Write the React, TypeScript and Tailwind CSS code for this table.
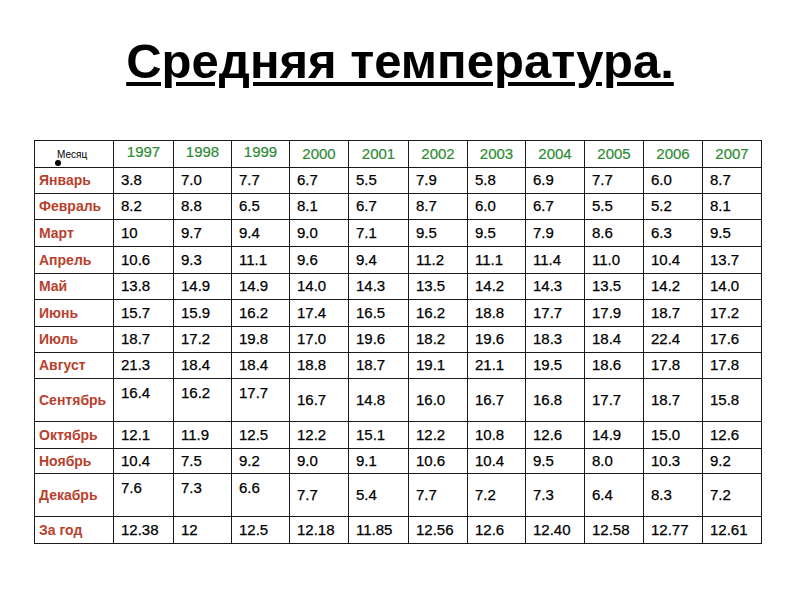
import React from "react";

const years = ["1997","1998","1999","2000","2001","2002","2003","2004","2005","2006","2007"];
const rows: { m: string; v: string[]; tall?: boolean; h: number }[] = [
  { m: "Январь", v: ["3.8","7.0","7.7","6.7","5.5","7.9","5.8","6.9","7.7","6.0","8.7"], h: 26 },
  { m: "Февраль", v: ["8.2","8.8","6.5","8.1","6.7","8.7","6.0","6.7","5.5","5.2","8.1"], h: 26 },
  { m: "Март", v: ["10","9.7","9.4","9.0","7.1","9.5","9.5","7.9","8.6","6.3","9.5"], h: 27 },
  { m: "Апрель", v: ["10.6","9.3","11.1","9.6","9.4","11.2","11.1","11.4","11.0","10.4","13.7"], h: 27 },
  { m: "Май", v: ["13.8","14.9","14.9","14.0","14.3","13.5","14.2","14.3","13.5","14.2","14.0"], h: 26 },
  { m: "Июнь", v: ["15.7","15.9","16.2","17.4","16.5","16.2","18.8","17.7","17.9","18.7","17.2"], h: 27 },
  { m: "Июль", v: ["18.7","17.2","19.8","17.0","19.6","18.2","19.6","18.3","18.4","22.4","17.6"], h: 26 },
  { m: "Август", v: ["21.3","18.4","18.4","18.8","18.7","19.1","21.1","19.5","18.6","17.8","17.8"], h: 26 },
  { m: "Сентябрь", v: ["16.4","16.2","17.7","16.7","14.8","16.0","16.7","16.8","17.7","18.7","15.8"], tall: true, h: 43 },
  { m: "Октябрь", v: ["12.1","11.9","12.5","12.2","15.1","12.2","10.8","12.6","14.9","15.0","12.6"], h: 27 },
  { m: "Ноябрь", v: ["10.4","7.5","9.2","9.0","9.1","10.6","10.4","9.5","8.0","10.3","9.2"], h: 25 },
  { m: "Декабрь", v: ["7.6","7.3","6.6","7.7","5.4","7.7","7.2","7.3","6.4","8.3","7.2"], tall: true, h: 43 },
  { m: "За год", v: ["12.38","12","12.5","12.18","11.85","12.56","12.6","12.40","12.58","12.77","12.61"], h: 27 },
];
const widths = [79, 60, 58, 58, 59, 60, 59, 58, 59, 59, 59, 59];

export default function App() {
  return (
    <div className="w-[800px] h-[600px] bg-white flex flex-col items-center" style={{ fontFamily: '"Liberation Sans", Arial, sans-serif' }}>
      <h1 className="mt-[33px] text-[49px] leading-[56px] font-bold underline decoration-[4px] underline-offset-[4px] text-black">
        Средняя температура.
      </h1>
      <table className="mt-[51px] ml-[-4px] border-collapse table-fixed" style={{ width: 727 }}>
        <colgroup>
          {widths.map((w, i) => (
            <col key={i} style={{ width: w }} />
          ))}
        </colgroup>
        <thead>
          <tr className="h-[27px]">
            <th className="border border-[#1a1a1a] p-0 pl-[22px] text-left relative align-middle">
              <span className="text-[10px] font-normal text-black relative top-[-1px]">Месяц</span>
              <span className="absolute left-[20px] top-[19px] w-[6px] h-[6px] rounded-full bg-black"></span>
            </th>
            {years.map((y, i) => (
              <th key={y} className="border border-[#1a1a1a] p-0 text-center text-[15px] font-normal text-[#2e8a34] [-webkit-text-stroke:0.2px_#2e8a34] align-middle">
                <span className={i < 3 ? "relative top-[-2px]" : ""}>{y}</span>
              </th>
            ))}
          </tr>
        </thead>
        <tbody>
          {rows.map((r) => (
            <tr key={r.m} style={{ height: r.h }}>
              <td className="border border-[#1a1a1a] pl-[4px] text-[14px] font-bold text-[#b8412d] align-middle">{r.m}</td>
              {r.v.map((v, i) => (
                <td
                  key={i}
                  className={
                    "border border-[#1a1a1a] pl-[7px] text-[15px] text-black [-webkit-text-stroke:0.25px_#000] " +
                    (r.tall && i < 3 ? "align-top pt-[3px]" : "align-middle")
                  }
                >
                  {v}
                </td>
              ))}
            </tr>
          ))}
        </tbody>
      </table>
    </div>
  );
}
